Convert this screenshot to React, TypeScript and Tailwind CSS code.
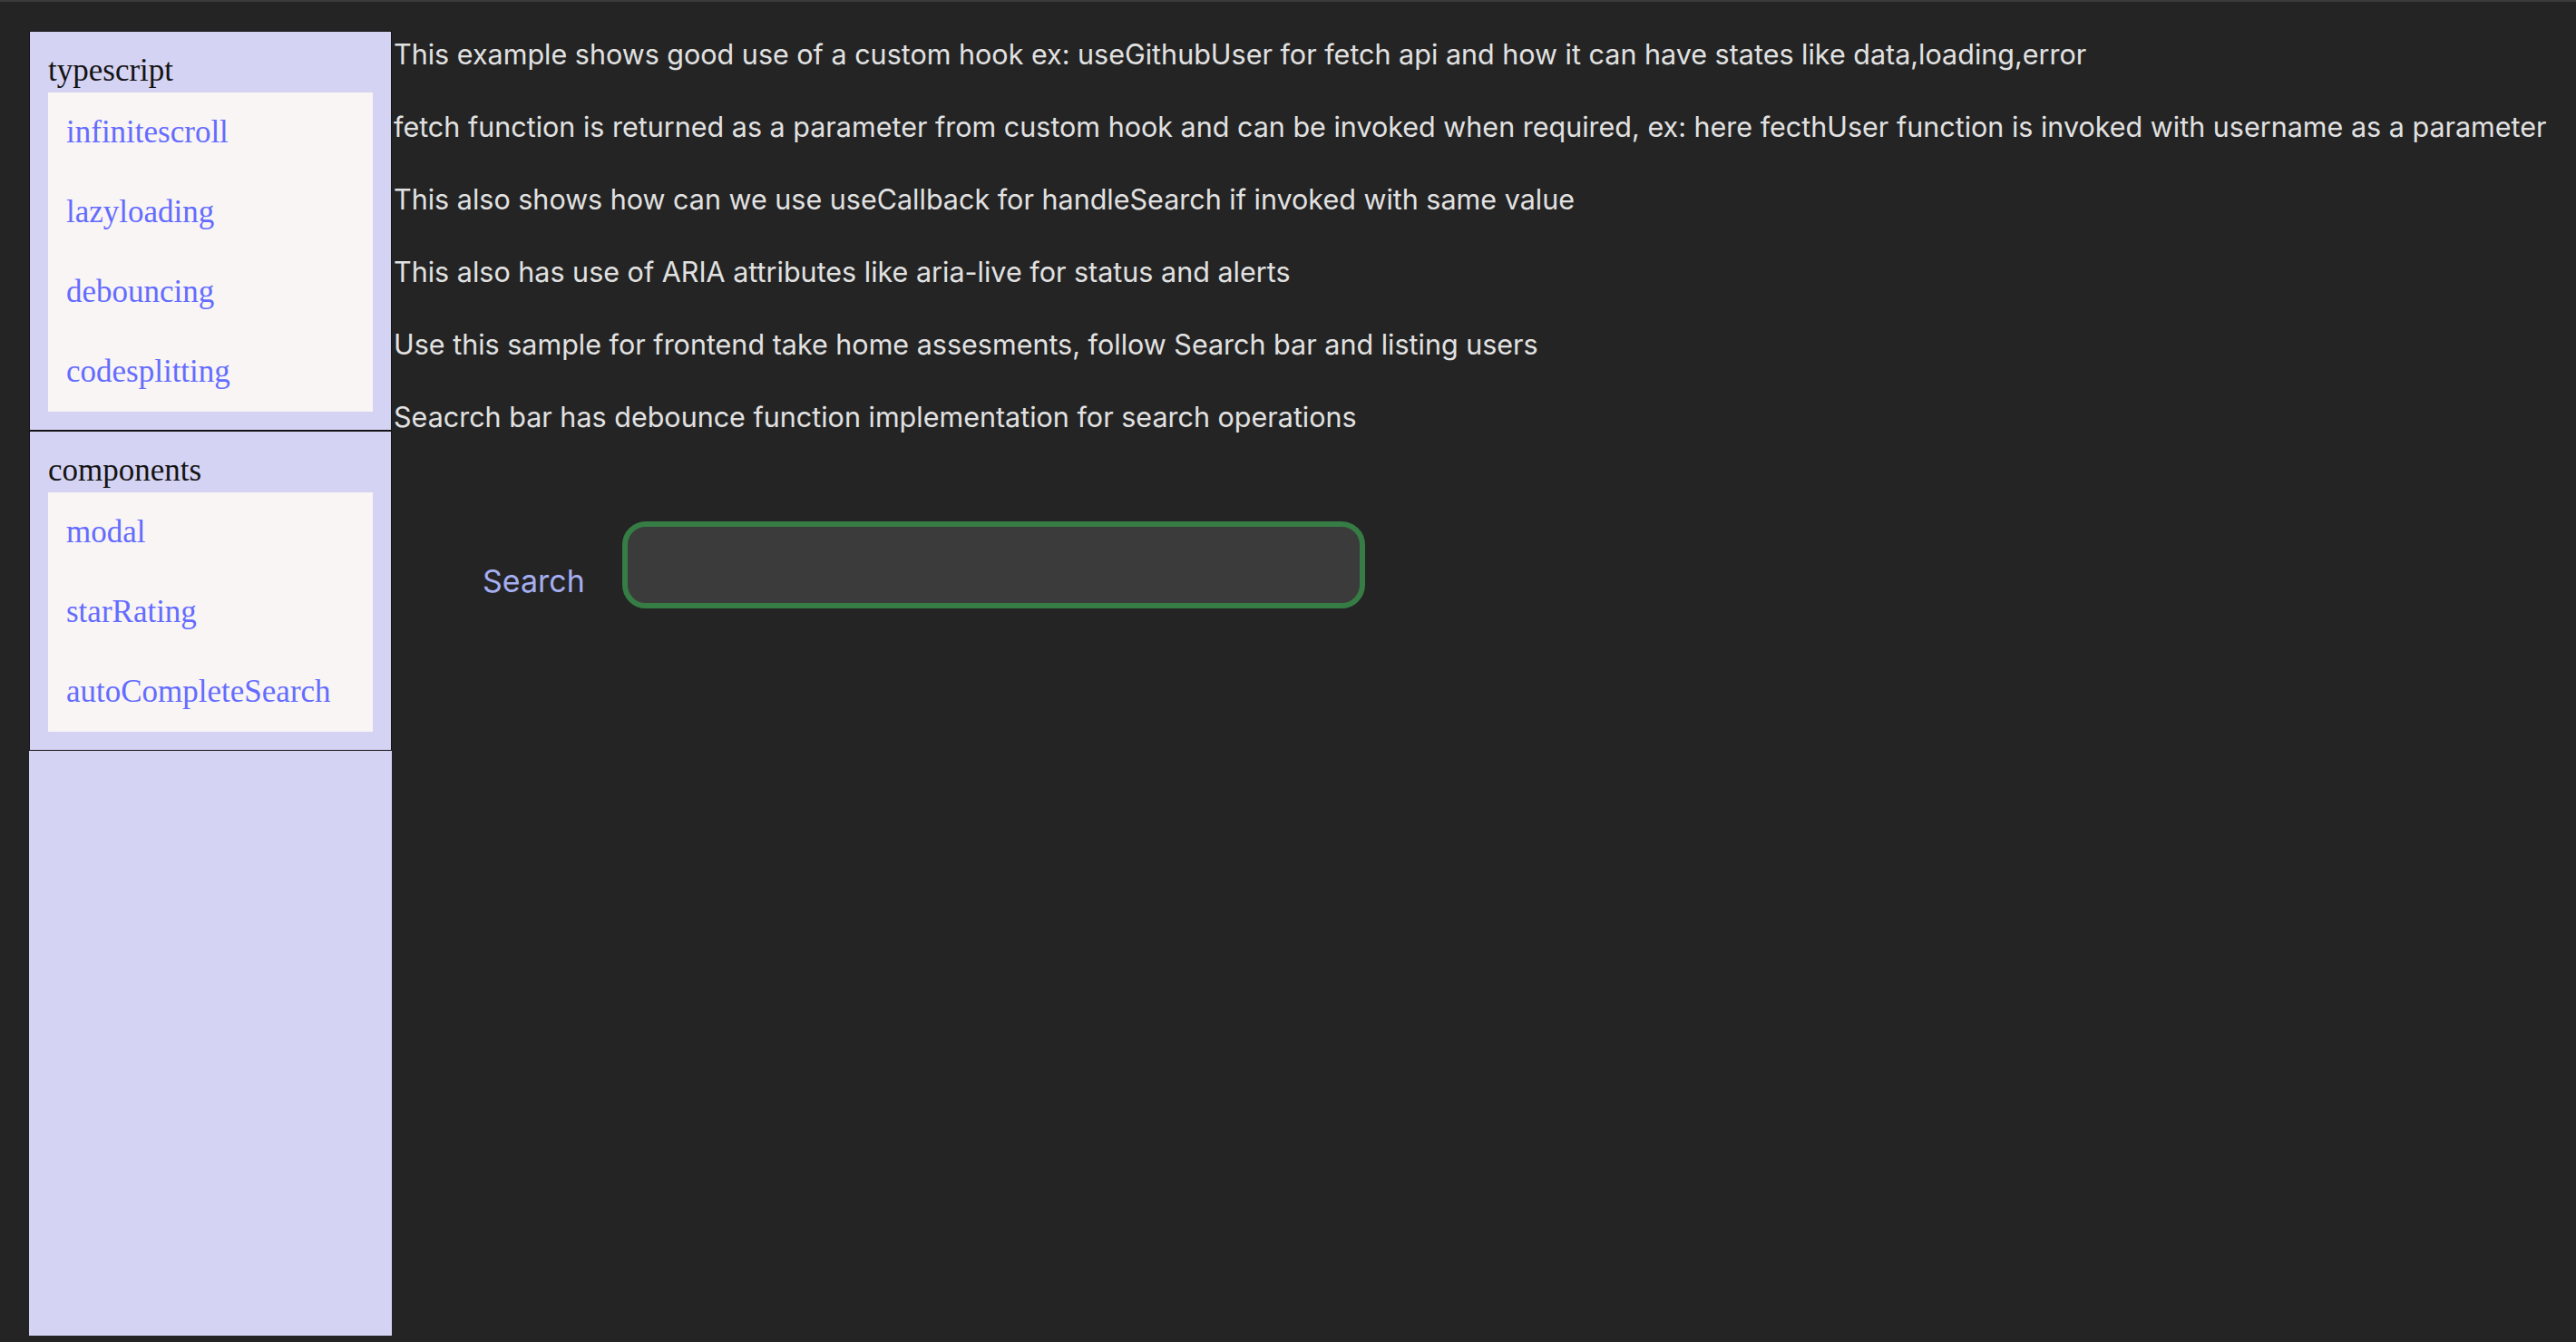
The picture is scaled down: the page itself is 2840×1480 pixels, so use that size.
import React from "react";

const sections = [
  { title: "typescript", links: ["infinitescroll", "lazyloading", "debouncing", "codesplitting"] },
  { title: "components", links: ["modal", "starRating", "autoCompleteSearch"] },
];

const notes = [
  "This example shows good use of a custom hook ex: useGithubUser for fetch api and how it can have states like data,loading,error",
  "fetch function is returned as a parameter from custom hook and can be invoked when required, ex: here fecthUser function is invoked with username as a parameter",
  "This also shows how can we use useCallback for handleSearch if invoked with same value",
  "This also has use of ARIA attributes like aria-live for status and alerts",
  "Use this sample for frontend take home assesments, follow Search bar and listing users",
  "Seacrch bar has debounce function implementation for search operations",
];

function Sidebar() {
  return (
    <aside className="ml-[32px] mt-[32px] mb-[7px] w-[400px] shrink-0 bg-[#d5d3f3] font-['Liberation_Serif',serif]">
      {sections.map((s) => (
        <section key={s.title} className="border border-[#141414] px-[20px] pt-[18px] pb-[20px]">
          <h2 className="text-[35px] leading-[49px] text-[#141414]">{s.title}</h2>
          <ul className="bg-[#f9f5f4] px-[20px]">
            {s.links.map((l) => (
              <li key={l}>
                <a href="#" className="block text-[35px] leading-[88px] text-[#646cff]">
                  {l}
                </a>
              </li>
            ))}
          </ul>
        </section>
      ))}
    </aside>
  );
}

export default function App() {
  return (
    <div className="flex h-screen overflow-hidden border-t-2 border-[#3b3b3b] bg-[#242424] font-['Inter',sans-serif]">
      <Sidebar />
      <main className="ml-[2px] pt-[40px]">
        <div className="flex flex-col gap-[44px]">
          {notes.map((n) => (
            <p key={n} className="whitespace-nowrap text-[30.5px] leading-[36px] text-[#e1e1e1]">
              {n}
            </p>
          ))}
        </div>
        <div className="mt-[97px] flex items-center pl-[98px]">
          <label htmlFor="search" className="mr-[41px] mt-[36px] text-[34px] leading-[40px] text-[#a5aef0]">
            Search
          </label>
          <input
            id="search"
            className="h-[96px] w-[819px] rounded-[26px] border-[6px] border-[#367c45] bg-[#3b3b3b] px-4 text-[30px] text-white outline-none"
          />
        </div>
      </main>
    </div>
  );
}
